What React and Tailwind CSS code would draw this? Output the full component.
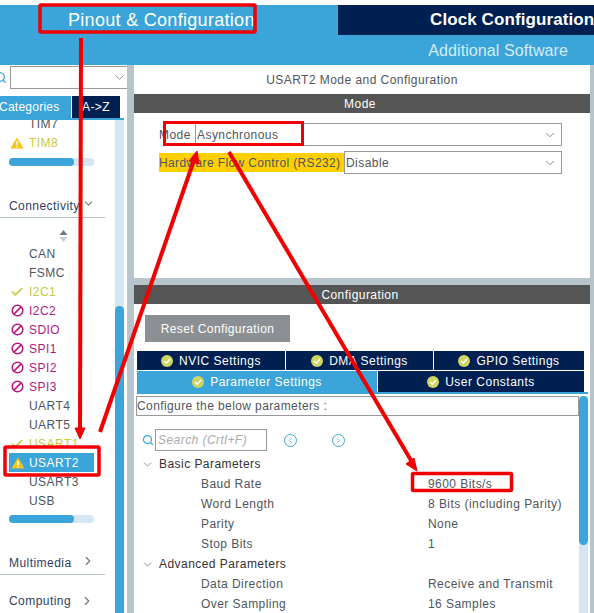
import { Check, ChevronDown, ChevronLeft, ChevronRight, Search } from 'lucide-react';

const font = { fontFamily: '"Liberation Sans", Arial, sans-serif' };

function Warn() {
  return (
    <svg width="14" height="12" viewBox="0 0 14 12" className="shrink-0">
      <path d="M7 0.5 L13.6 11.5 L0.4 11.5 Z" fill="#f5c518" />
      <rect x="6.3" y="4" width="1.4" height="4" fill="#fff" />
      <rect x="6.3" y="9" width="1.4" height="1.4" fill="#fff" />
    </svg>
  );
}

function Ban() {
  return (
    <svg width="13" height="13" viewBox="0 0 13 13" className="shrink-0">
      <circle cx="6.5" cy="6.5" r="5.3" fill="none" stroke="#b5177f" strokeWidth="1.5" />
      <path d="M2.9 10.1 L10.1 2.9" stroke="#b5177f" strokeWidth="1.5" />
    </svg>
  );
}

function Ok() {
  return (
    <svg width="12" height="12" viewBox="0 0 12 12" className="shrink-0">
      <circle cx="6" cy="6" r="6" fill="#cfd561" />
      <path d="M3 6 L5.3 8.2 L9 4" fill="none" stroke="#fff" strokeWidth="1.5" />
    </svg>
  );
}

function Item({ name, state }) {
  const color =
    state === 'ban' ? 'text-[#b5177f]' : state === 'ok' || state === 'warn' ? 'text-[#c4cc3e]' : 'text-[#4f5560]';
  return (
    <div className="flex h-[19px] items-center">
      <div className="flex w-[29px] justify-center pl-[5px]">
        {state === 'ban' && <Ban />}
        {state === 'warn' && <Warn />}
        {state === 'ok' && <Check size={14} strokeWidth={3} className="text-[#c4cc3e]" />}
      </div>
      <span className={`text-[12px] ${color}`}>{name}</span>
    </div>
  );
}

function HBar({ className }) {
  return (
    <div className={`ml-[9px] h-[8px] w-[85px] rounded-full bg-[#d6e6f3] ${className}`}>
      <div className="h-full w-[65px] rounded-full bg-[#3ba5d9]" />
    </div>
  );
}

function Group({ name, open, className }) {
  return (
    <div className={`mr-[10px] flex h-[24px] items-center border-b border-[#b8c4cc] pl-[9px] ${className}`}>
      <span className="text-[12px] text-[#2f3d66]">{name}</span>
      {open ? (
        <ChevronDown size={13} className="ml-[2px] -translate-y-[2px] text-[#777]" />
      ) : (
        <ChevronRight size={14} className="ml-[9px] -translate-y-[2px] text-[#777]" />
      )}
    </div>
  );
}

function Sidebar() {
  return (
    <aside className="flex w-[127px] shrink-0 flex-col bg-white">
      <div className="flex h-[25px] items-center">
        <Search size={13} strokeWidth={2.5} className="-ml-[6px] shrink-0 text-[#3ba5d9]" />
        <div className="ml-[3px] flex h-[23px] flex-1 items-center justify-end border border-r-0 border-[#999]">
          <ChevronDown size={15} strokeWidth={1.3} className="text-[#777]" />
        </div>
      </div>
      <div className="mt-[6px] flex h-[24px] w-[124px] border-b-2 border-[#3ba5d9]">
        <div className="flex w-[71px] items-center overflow-hidden bg-[#3ba5d9] text-[12px] tracking-[0.25px] whitespace-nowrap text-white">
          <span className="-ml-[1px]">Categories</span>
        </div>
        <div className="ml-[1px] flex w-[48px] items-center justify-center bg-[#002052] text-[12px] text-white">
          A-&gt;Z
        </div>
      </div>
      <div className="flex min-h-0 flex-1">
        <div className="w-[115px] shrink-0 overflow-hidden">
          <div className="-mt-[6px]">
            <Item name="TIM7" />
            <Item name="TIM8" state="warn" />
          </div>
          <HBar className="mt-[6px]" />
          <Group name="Connectivity" open className="mt-[28px]" />
          <div className="flex h-[26px] justify-center pt-[12px] pl-[12px]">
            <svg width="9" height="12" viewBox="0 0 9 12">
              <path d="M4.5 0 L8.5 5 L0.5 5 Z" fill="#777" />
              <path d="M4.5 12 L8.5 7 L0.5 7 Z" fill="#ccc" />
            </svg>
          </div>
          <Item name="CAN" />
          <Item name="FSMC" />
          <Item name="I2C1" state="ok" />
          <Item name="I2C2" state="ban" />
          <Item name="SDIO" state="ban" />
          <Item name="SPI1" state="ban" />
          <Item name="SPI2" state="ban" />
          <Item name="SPI3" state="ban" />
          <Item name="UART4" />
          <Item name="UART5" />
          <Item name="USART1" state="ok" />
          <div className="ml-[9px] flex h-[19px] w-[85px] items-center bg-[#3ba5d9] pl-[2px]">
            <Warn />
            <span className="ml-[4px] text-[12px] text-white">USART2</span>
          </div>
          <Item name="USART3" />
          <Item name="USB" />
          <HBar className="mt-[5px]" />
          <Group name="Multimedia" className="mt-[28px]" />
          <div className="mt-[17px] flex items-center pl-[9px]">
            <span className="text-[12px] text-[#2f3d66]">Computing</span>
            <ChevronRight size={14} className="ml-[9px] text-[#777]" />
          </div>
        </div>
        <div className="w-[9px] bg-[#d6e6f3] pt-[186px]">
          <div className="h-full rounded-t-full bg-[#3ba5d9]" />
        </div>
      </div>
    </aside>
  );
}

function SelectBox({ value, className }) {
  return (
    <div className={`flex h-[23px] items-center justify-between border border-[#999] bg-white pr-[4px] pl-[1px] ${className}`}>
      <span className="text-[12px] text-[#4f5560]">{value}</span>
      <ChevronDown size={14} strokeWidth={1.3} className="text-[#666]" />
    </div>
  );
}

function Bar({ title }) {
  return (
    <div className="flex h-[19px] items-center justify-center bg-[#555] pr-[4px] text-[12px] text-white">{title}</div>
  );
}

function Tab({ label, active, className }) {
  return (
    <div className={`flex items-center justify-center gap-[6px] text-[12px] tracking-[0.5px] text-white ${active ? 'bg-[#3ba5d9]' : 'bg-[#002052]'} ${className}`}>
      <Ok />
      {label}
    </div>
  );
}

function Param({ name, value }) {
  return (
    <div className="flex h-[20px] items-center text-[12px] text-[#4f5560]">
      <span className="w-[292px] pl-[65px]">{name}</span>
      <span>{value}</span>
    </div>
  );
}

function ParamGroup({ name }) {
  return (
    <div className="flex h-[20px] items-center text-[12px] text-[#333]">
      <ChevronDown size={13} strokeWidth={1.3} className="ml-[5px] text-[#666]" />
      <span className="ml-[5px]">{name}</span>
    </div>
  );
}

function Annotations() {
  return (
    <svg className="pointer-events-none absolute inset-0" width="594" height="613" fill="none" stroke="#f00000">
      <rect x="40" y="5" width="215" height="27" rx="1" strokeWidth="3.5" />
      <rect x="164.5" y="122.5" width="138" height="22" strokeWidth="3" />
      <rect x="5" y="447" width="94" height="28" rx="1" strokeWidth="3.5" />
      <rect x="412.5" y="473.5" width="99" height="17" rx="1" strokeWidth="3.5" />
      <path d="M81 38 L80 430" strokeWidth="4" />
      <path d="M80 439 L75 428 L85 428 Z" fill="#f00000" strokeWidth="1" />
      <path d="M100 432 L194 160" strokeWidth="4" />
      <path d="M197 151 L199 164 L189 161 Z" fill="#f00000" strokeWidth="1" />
      <path d="M229 152 L412 462" strokeWidth="4" />
      <path d="M417 471 L406 464 L414 458 Z" fill="#f00000" strokeWidth="1" />
    </svg>
  );
}

export default function App() {
  return (
    <div className="relative flex h-[613px] w-[594px] flex-col overflow-hidden bg-white tracking-[0.45px]" style={font}>
      <header className="mt-[5px] h-[60px] shrink-0 bg-[#3ba5d9]">
        <div className="flex h-[30px]">
          <div className="w-[337px] pl-[68px] text-[18px] leading-[30px] tracking-[0.3px] whitespace-nowrap text-white">
            Pinout &amp; Configuration
          </div>
          <div className="ml-[1px] flex-1 overflow-hidden bg-[#002052] pl-[92px] text-[17px] leading-[30px] font-bold tracking-[0.1px] whitespace-nowrap text-white">
            Clock Configuration
          </div>
        </div>
        <div className="pr-[26px] text-right text-[16px] leading-[31px] tracking-[0.1px] text-[#d5ecf8]">Additional Software</div>
      </header>

      <div className="flex min-h-0 flex-1 bg-[#b8c4cc]">
        <Sidebar />
        <main className="ml-[7px] flex w-[456px] shrink-0 flex-col gap-[7px]">
          <section className="flex h-[213px] flex-col bg-white">
            <div className="flex h-[29px] items-center justify-center text-[12px] text-[#4f5560]">
              USART2 Mode and Configuration
            </div>
            <Bar title="Mode" />
            <div className="mt-[10px] ml-[25px] flex h-[23px] items-center">
              <span className="w-[36px] text-[12px] text-[#4f5560]">Mode</span>
              <SelectBox value="Asynchronous" className="w-[367px]" />
            </div>
            <div className="mt-[5px] ml-[25px] flex h-[23px] items-center">
              <span className="flex h-[19px] w-[185px] items-center bg-[#ffd000] text-[12px] tracking-[0.37px] whitespace-nowrap text-[#4f5560]">
                Hardware Flow Control (RS232)
              </span>
              <SelectBox value="Disable" className="w-[218px]" />
            </div>
          </section>

          <section className="flex min-h-0 flex-1 flex-col overflow-hidden bg-white">
            <Bar title="Configuration" />
            <div className="mt-[11px] ml-[11px] flex h-[27px] w-[145px] items-center justify-center bg-[#8b9095] text-[12px] tracking-[0.4px] text-white">
              Reset Configuration
            </div>
            <div className="mt-[9px] ml-[3px] flex h-[19px] w-[447px] gap-[1px]">
              <Tab label="NVIC Settings" className="w-[148px]" />
              <Tab label="DMA Settings" className="w-[147px]" />
              <Tab label="GPIO Settings" className="flex-1" />
            </div>
            <div className="mt-[1px] ml-[3px] flex h-[21px] w-[447px] gap-[1px]">
              <Tab label="Parameter Settings" active className="w-[240px]" />
              <Tab label="User Constants" className="flex-1" />
            </div>
            <div className="ml-[3px] h-[2px] w-[451px] bg-[#3ba5d9]" />
            <div className="mt-[2px] ml-[2px] flex min-h-0 flex-1">
              <div className="w-[443px] shrink-0">
                <div className="flex h-[20px] items-center border border-[#999] text-[12px] tracking-[0.4px] text-[#4f5560]">
                  Configure the below parameters :
                </div>
                <div className="mt-[13px] flex h-[22px] items-center">
                  <Search size={12} strokeWidth={2.5} className="ml-[6px] text-[#3ba5d9]" />
                  <div className="ml-[1px] flex h-[22px] w-[112px] items-center border border-[#999] pl-[2px] text-[12px] text-[#aaa] italic">
                    Search (Crtl+F)
                  </div>
                  <div className="ml-[17px] flex h-[13px] w-[13px] items-center justify-center rounded-full border border-[#3ba5d9]">
                    <ChevronLeft size={9} strokeWidth={2} className="text-[#3ba5d9]" />
                  </div>
                  <div className="ml-[35px] flex h-[13px] w-[13px] items-center justify-center rounded-full border border-[#3ba5d9]">
                    <ChevronRight size={9} strokeWidth={2} className="text-[#3ba5d9]" />
                  </div>
                </div>
                <div className="mt-[3px]">
                  <ParamGroup name="Basic Parameters" />
                  <Param name="Baud Rate" value="9600 Bits/s" />
                  <Param name="Word Length" value="8 Bits (including Parity)" />
                  <Param name="Parity" value="None" />
                  <Param name="Stop Bits" value="1" />
                  <ParamGroup name="Advanced Parameters" />
                  <Param name="Data Direction" value="Receive and Transmit" />
                  <Param name="Over Sampling" value="16 Samples" />
                </div>
              </div>
              <div className="w-[9px] bg-[#d6e6f3]">
                <div className="h-[149px] rounded-full bg-[#3ba5d9]" />
              </div>
            </div>
          </section>
        </main>
      </div>
      <Annotations />
    </div>
  );
}
